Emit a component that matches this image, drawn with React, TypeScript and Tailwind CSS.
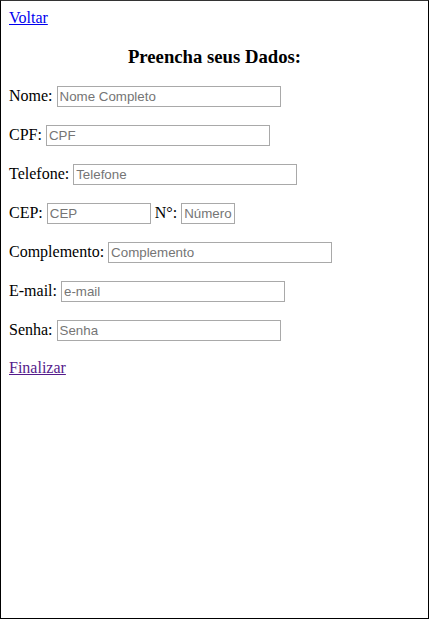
export default function App() {
  const inputCls =
    "inline-block h-[21px] mb-[2px] border border-[#a9a9a9] px-[2px] py-[1px] align-baseline font-['Liberation_Sans',Arial,sans-serif] text-[13.33px] text-black placeholder:text-[#757575] bg-white";

  return (
    <div className="box-border h-[619px] w-[429px] border border-black border-t-[#333] bg-white p-2 font-['Liberation_Serif','Times_New_Roman',serif] text-[16px] leading-[normal] text-black">
      <a href="#" className="text-[#0000ee] underline">
        Voltar
      </a>

      <h3 className="my-[18.72px] text-center text-[18.72px] font-bold">Preencha seus Dados:</h3>

      <form>
        <p className="my-4">
          Nome: <input type="text" placeholder="Nome Completo" className={`${inputCls} w-[224px]`} />
        </p>
        <p className="my-4">
          CPF: <input type="text" placeholder="CPF" className={`${inputCls} w-[224px]`} />
        </p>
        <p className="my-4">
          Telefone: <input type="text" placeholder="Telefone" className={`${inputCls} w-[224px]`} />
        </p>
        <p className="my-4">
          CEP: <input type="text" placeholder="CEP" className={`${inputCls} w-[104px]`} /> N°:{" "}
          <input type="text" placeholder="Número" className={`${inputCls} w-[54px]`} />
        </p>
        <p className="my-4">
          Complemento: <input type="text" placeholder="Complemento" className={`${inputCls} w-[224px]`} />
        </p>
        <p className="my-4">
          E-mail: <input type="email" placeholder="e-mail" className={`${inputCls} w-[224px]`} />
        </p>
        <p className="my-4">
          Senha: <input type="password" placeholder="Senha" className={`${inputCls} w-[224px]`} />
        </p>
      </form>

      <a href="#" className="text-[#551a8b] underline">
        Finalizar
      </a>
    </div>
  );
}
